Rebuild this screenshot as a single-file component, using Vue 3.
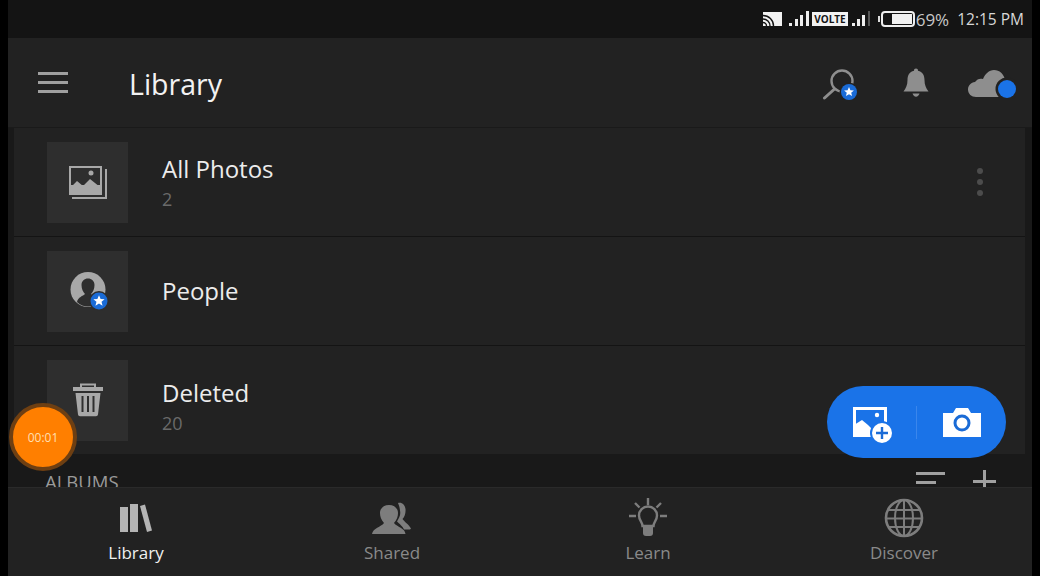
<script setup>
const rows = [
  { name: 'All Photos', count: '2', icon: 'photos', more: true },
  { name: 'People', count: '', icon: 'people' },
  { name: 'Deleted', count: '20', icon: 'trash' }
]

const tabs = [
  { name: 'Library', icon: 'library', active: true },
  { name: 'Shared', icon: 'shared' },
  { name: 'Learn', icon: 'learn' },
  { name: 'Discover', icon: 'discover' }
]

const starPoints = '0,-5 1.4,-1.7 4.9,-1.5 2.2,0.7 3.1,4.1 0,2.2 -3.1,4.1 -2.2,0.7 -4.9,-1.5 -1.4,-1.7'
</script>

<template>
  <div class="screen">
    <div class="status">
      <svg class="cast" width="19" height="14" viewBox="0 0 19 14">
        <rect x="0" y="0" width="19" height="14" fill="#f2f2f2" />
        <path d="M0 3.500a10.500 10.500 0 0 1 10.500 10.500M0 7a7 7 0 0 1 7 7M0 10.500a3.500 3.500 0 0 1 3.500 3.500" fill="none" stroke="#141414" stroke-width="1.400" />
      </svg>
      <svg class="bars" width="21" height="16" viewBox="0 0 21 16">
        <rect x="0" y="12" width="3" height="3" fill="#eee" />
        <rect x="6" y="8" width="3" height="7" fill="#eee" />
        <rect x="11" y="4" width="3" height="11" fill="#eee" />
        <rect x="17" y="0" width="3" height="15" fill="#eee" />
      </svg>
      <span class="volte">VOLTE</span>
      <svg class="bars small" width="18" height="16" viewBox="0 0 18 16">
        <rect x="0" y="12" width="3" height="3" fill="#eee" />
        <rect x="5" y="8" width="3" height="7" fill="#eee" />
        <rect x="10" y="4" width="3" height="11" fill="#eee" />
        <rect x="16" y="0" width="2" height="15" fill="#555" />
      </svg>
      <div class="nub"></div>
      <div class="battery"><div class="battery-fill"></div></div>
      <span class="percent">69%</span>
      <span class="clock">12:15 PM</span>
    </div>

    <header class="topbar">
      <div class="burger"><i></i><i></i><i></i></div>
      <h1>Library</h1>
      <div class="top-icons">
        <svg class="search" width="36" height="34" viewBox="0 0 36 34">
          <circle cx="20" cy="15" r="10.500" fill="none" stroke="#8e8e8e" stroke-width="2.400" />
          <path d="M12.500 23 2.500 32" stroke="#8e8e8e" stroke-width="3" stroke-linecap="round" />
          <circle cx="27" cy="26" r="9.500" fill="#222" />
          <circle cx="27" cy="26" r="8" fill="#1a6bd6" />
          <polygon :points="starPoints" transform="translate(27 26)" fill="#fff" />
        </svg>
        <svg class="bell" width="28" height="32" viewBox="0 0 28 32">
          <path d="M14 1.500c1.300 0 2 .8 2 2.200 4.700 1 6.500 4.700 6.500 9.300 0 5 1.500 8 4 11.500H1.500c2.500-3.500 4-6.500 4-11.500 0-4.600 1.800-8.300 6.500-9.300 0-1.400.7-2.200 2-2.200z" fill="#8e8e8e" />
          <path d="M10.500 26.500h7c-.5 2-2 3.200-3.500 3.200s-3-1.200-3.500-3.200z" fill="#8e8e8e" />
        </svg>
        <svg width="48" height="32" viewBox="0 0 48 32">
          <path d="M8 30c-4.500 0-8-3-8-7.500 0-4 3-7 7-7.500 2-3 5-4 8-3 2-5 6-9 11-9 5.500 0 10 4 11 10 4 .5 6 4 6 8 0 5-3 9-7 9z" fill="#8e8e8e" />
          <circle cx="39" cy="22" r="11.500" fill="#222" />
          <circle cx="39" cy="22" r="9" fill="#1a73e8" />
        </svg>
      </div>
    </header>

    <main class="list">
      <div v-for="row in rows" :key="row.name" class="row">
        <div class="thumb">
          <svg v-if="row.icon === 'photos'" width="40" height="34" viewBox="0 0 40 34">
            <path d="M38 4v29H4" fill="none" stroke="#a8a8a8" stroke-width="2" />
            <rect x="1" y="1" width="33" height="29" fill="#a8a8a8" />
            <rect x="3" y="3" width="29" height="17" fill="#2e2e2e" />
            <path d="M3 22l6-6 6 5 7-7 10 8v4H3z" fill="#a8a8a8" />
            <circle cx="23" cy="8" r="2.500" fill="#a8a8a8" />
          </svg>
          <svg v-else-if="row.icon === 'people'" width="48" height="40" viewBox="0 0 48 40">
            <g transform="translate(6 0)">
              <circle cx="18" cy="18.500" r="17.500" fill="#a8a8a8" />
              <path d="M7 31c1-5 6-6 8-8-2-2-3.500-5-3.500-9 0-4 3-6.500 6.500-6.500s6.500 2.500 6.500 6.500c0 4-1.500 7-3.500 9 2 2 7 3 8 8-3 3-7 4.500-11 4.500s-8-1.500-11-4.500z" fill="#2e2e2e" />
              <circle cx="29" cy="30" r="10" fill="#2e2e2e" />
              <circle cx="29" cy="30" r="8.500" fill="#1a6bd6" />
              <polygon :points="starPoints" transform="translate(29 30) scale(1.150)" fill="#fff" />
            </g>
          </svg>
          <svg v-else width="32" height="34" viewBox="0 0 32 34">
            <path d="M9 4V1.500h14V4" fill="none" stroke="#a8a8a8" stroke-width="2" />
            <rect x="1" y="4" width="30" height="4" fill="#a8a8a8" />
            <path d="M3.500 10h25l-2.500 21.500a2 2 0 0 1-2 1.800H8a2 2 0 0 1-2-1.800z" fill="#a8a8a8" />
            <path d="M10.500 13v16M16 13v16M21.500 13v16" stroke="#2e2e2e" stroke-width="2" />
          </svg>
        </div>
        <div class="info">
          <div class="name">{{ row.name }}</div>
          <div v-if="row.count" class="count">{{ row.count }}</div>
        </div>
        <div v-if="row.more" class="more"><i></i><i></i><i></i></div>
      </div>
    </main>

    <section class="albums">
      <span>ALBUMS</span>
      <div class="album-tools">
        <svg class="sort" width="29" height="13" viewBox="0 0 29 13">
          <rect x="0" y="0" width="29" height="3" fill="#a0a0a0" />
          <rect x="0" y="9" width="20" height="3" fill="#a0a0a0" />
        </svg>
        <svg width="23" height="23" viewBox="0 0 23 23">
          <path d="M11.500 0v23M0 11.500h23" stroke="#a0a0a0" stroke-width="3" />
        </svg>
      </div>
    </section>

    <nav class="tabs">
      <div v-for="tab in tabs" :key="tab.name" class="tab" :class="{ active: tab.active }">
        <div class="tab-icon">
          <svg v-if="tab.icon === 'library'" width="32" height="30" viewBox="0 0 32 30">
            <rect x="0" y="4" width="8" height="25" fill="#b4b4b4" />
            <rect x="10" y="1" width="8" height="28" fill="#b4b4b4" />
            <path d="M20 3l5-1.500 7 26-5 1.500z" fill="#b4b4b4" />
          </svg>
          <svg v-else-if="tab.icon === 'shared'" width="40" height="32" viewBox="0 0 40 32">
            <path d="M26 1c4-1 7 2 7.500 6 .4 4-1 8-3 10 2 3 6 5 8.500 9.500l-1 1H32c-1-3-5-6-7-8 2-4 4-6 3-11-.3-3-1-5-2-7.500z" fill="#7d7d7d" />
            <path d="M0 32c1-6 9-7 12-11-3-3-4-7-4-10 0-5 4-8 9-8s9 3 9 8c0 3-1 7-4 10 3 4 11 5 11.500 11z" fill="#7d7d7d" />
          </svg>
          <svg v-else-if="tab.icon === 'learn'" width="38" height="40" viewBox="0 0 38 40">
            <path d="M19 0v7M6 5l4.500 4.500M32 5l-4.500 4.500M0 18h7M31 18h7" stroke="#7d7d7d" stroke-width="2.400" />
            <path d="M13.500 28c0-4-3.500-5.500-3.500-10.500a9 9 0 0 1 18 0c0 5-3.500 6.500-3.500 10.500z" fill="none" stroke="#7d7d7d" stroke-width="2.400" />
            <path d="M14 29h10v6a3 3 0 0 1-3 3h-4a3 3 0 0 1-3-3z" fill="#7d7d7d" />
          </svg>
          <svg v-else width="40" height="40" viewBox="0 0 40 40">
            <g fill="none" stroke="#7d7d7d" stroke-width="2">
              <circle cx="20" cy="20" r="18" stroke-width="2.600" />
              <ellipse cx="20" cy="20" rx="9" ry="18" />
              <path d="M20 2v36M4 12h32M2 20.500h36M4 29h32" />
            </g>
          </svg>
        </div>
        <span>{{ tab.name }}</span>
      </div>
    </nav>

    <div class="recorder">00:01</div>

    <div class="fab">
      <svg class="fab-photo" width="40" height="43" viewBox="0 0 40 43">
        <rect x="1.500" y="1.500" width="31" height="27" fill="none" stroke="#fff" stroke-width="3" />
        <path d="M1 30V18l8-5 6 5 5 5v7z" fill="#fff" />
        <circle cx="24" cy="8" r="2.200" fill="#fff" />
        <circle cx="29" cy="26" r="12" fill="#1a73e8" />
        <circle cx="29" cy="26" r="10" fill="#fff" />
        <path d="M29 20v12M23 26h12" stroke="#1a6bd6" stroke-width="2.400" />
      </svg>
      <div class="fab-line"></div>
      <svg width="40" height="29" viewBox="0 0 40 29">
        <path d="M1 5h10l3-5h12l3 5h10v24H1z" fill="#fff" />
        <circle cx="20" cy="15" r="7" fill="none" stroke="#1a6bd6" stroke-width="3" />
      </svg>
    </div>
  </div>
</template>

<style scoped>
.screen {
  position: relative;
  width: 1024px;
  height: 576px;
  padding: 0 8px;
  background: #000;
  font-family: "Open Sans", sans-serif;
  display: flex;
  flex-direction: column;
  overflow: hidden;
}

.status {
  height: 38px;
  flex: none;
  background: #141414;
  color: #e4e4e4;
  display: flex;
  align-items: center;
  justify-content: flex-end;
  padding-right: 8px;
}

.cast { margin-right: 7px; }
.bars { margin-right: 2px; }
.bars.small { margin-right: 8px; }

.volte {
  background: #f2f2f2;
  color: #141414;
  font-size: 10px;
  font-weight: 700;
  line-height: 14px;
  padding: 0 2px;
  margin-right: 4px;
}

.nub {
  width: 2px;
  height: 6px;
  background: #ddd;
  margin-right: 1px;
}

.battery {
  width: 34px;
  height: 16px;
  border: 2px solid #eee;
  border-radius: 4px;
  padding: 1px;
  display: flex;
  justify-content: flex-end;
  box-sizing: border-box;
}

.battery-fill { width: 20px; background: #f2f2f2; }
.percent { margin: 0 8px 0 1px; font-size: 17px; color: #c8c8c8; }
.clock { font-size: 15.500px; color: #d8d8d8; }

.topbar {
  height: 90px;
  flex: none;
  background: #222;
  border-bottom: 1px solid #1a1a1a;
  box-sizing: border-box;
  display: flex;
  align-items: center;
  padding: 0 16px 0 30px;
}

.burger {
  width: 30px;
  display: flex;
  flex-direction: column;
  gap: 6px;
}

.burger i {
  height: 3px;
  background: #a0a0a0;
}

h1 {
  margin: 2px 0 0 61px;
  font-size: 28.5px;
  font-weight: 400;
  color: #f2f2f2;
  flex: 1;
}

.top-icons {
  display: flex;
  align-items: center;
}

.search { margin-right: 44px; }
.bell { margin-right: 38px; }

.list {
  flex: none;
  background: #222;
  border-left: 6px solid #191919;
  border-right: 7px solid #191919;
}

.row {
  height: 109px;
  box-sizing: border-box;
  border-bottom: 1px solid #141414;
  display: flex;
  align-items: center;
  padding-left: 33px;
}

.row:last-child {
  height: 108px;
  border-bottom: none;
}

.row:last-child .info { margin-top: 12px; }

.thumb {
  width: 81px;
  height: 81px;
  flex: none;
  background: #2e2e2e;
  display: flex;
  align-items: center;
  justify-content: center;
}

.info { margin-left: 34px; flex: 1; }

.name {
  font-size: 24px;
  line-height: 34px;
  color: #ececec;
}

.count {
  font-size: 18px;
  line-height: 26px;
  color: #6a6a6a;
}

.more {
  display: flex;
  flex-direction: column;
  gap: 5px;
  margin-right: 42px;
}

.more i {
  width: 6px;
  height: 6px;
  border-radius: 50%;
  background: #4c4c4c;
}

.albums {
  height: 33px;
  flex: none;
  background: #191919;
  display: flex;
  justify-content: space-between;
  padding: 15px 36px 0 37px;
  box-sizing: border-box;
  overflow: hidden;
  font-size: 18.500px;
  color: #9a9a9a;
}

.album-tools {
  display: flex;
  gap: 28px;
  align-items: flex-start;
  margin-top: 1px;
}

.sort { margin-top: 2px; }

.tabs {
  flex: 1;
  background: #222;
  border-top: 1px solid #2a2a2a;
  display: grid;
  grid-template-columns: repeat(4, 256px);
}

.tab {
  display: flex;
  flex-direction: column;
  align-items: center;
  justify-content: flex-end;
  padding-bottom: 12px;
  gap: 3px;
  font-size: 17px;
  line-height: 23px;
  color: #8a8a8a;
}

.tab.active { color: #f0f0f0; }

.tab-icon {
  height: 40px;
  display: flex;
  align-items: center;
}

.recorder {
  position: absolute;
  left: 9px;
  top: 403px;
  width: 68px;
  height: 68px;
  box-sizing: border-box;
  border-radius: 50%;
  border: 4px solid #6e3f12;
  background: #ff7f00;
  color: #ffdfb2;
  font-size: 12px;
  display: flex;
  align-items: center;
  justify-content: center;
}

.fab {
  position: absolute;
  left: 827px;
  top: 386px;
  width: 179px;
  height: 72px;
  border-radius: 36px;
  background: #1a73e8;
  display: flex;
  align-items: center;
  padding-left: 26px;
  box-sizing: border-box;
}

.fab-photo { margin-top: 13px; }

.fab-line {
  width: 1px;
  height: 33px;
  margin: 0 25px 0 23px;
  background: #3a86ec;
}
</style>

<style>
html, body { background: #000; }
</style>
